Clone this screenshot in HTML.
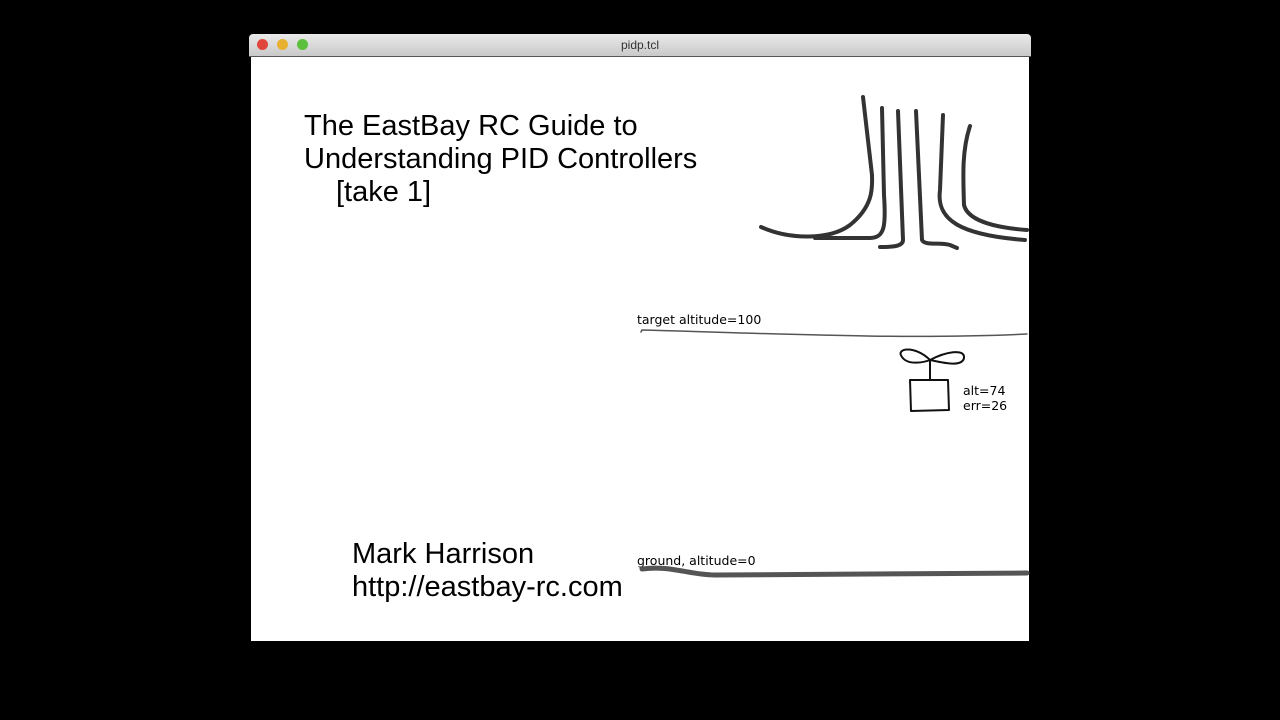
<!DOCTYPE html>
<html><head><meta charset="utf-8"><style>
body{margin:0;width:1280px;height:720px;background:#000;position:relative;overflow:hidden;font-family:"Liberation Sans",sans-serif}
#bar{position:absolute;left:249px;top:34px;width:782px;height:22px;background:linear-gradient(#eaeaea,#c9c9c9);border-bottom:1px solid #555;border-radius:4px 4px 0 0}
#bar .t{position:absolute;left:0;right:0;top:4px;text-align:center;font-size:12px;color:#333}
.d{position:absolute;top:5px;width:11px;height:11px;border-radius:50%}
.big{position:absolute;font-size:29px;color:#000;line-height:33px;white-space:pre}
.sm{position:absolute;font-family:"DejaVu Sans",sans-serif;font-size:12.5px;color:#000;line-height:15px}
</style></head><body>
<div id="bar"><div class="d" style="left:8px;background:#e0453b"></div><div class="d" style="left:28px;background:#e8b030"></div><div class="d" style="left:48px;background:#5cbf3e"></div><div class="t">pidp.tcl</div></div>
<div style="position:absolute;left:251px;top:57px;width:778px;height:584px;background:#fff"></div>
<div class="big" style="left:304px;top:110px">The EastBay RC Guide to
Understanding PID Controllers
<span style="padding-left:32px">[take 1]</span></div>
<div class="big" style="left:352px;top:538px">Mark Harrison
http://eastbay-rc.com</div>
<div class="sm" style="left:637px;top:312px">target altitude=100</div>
<div class="sm" style="left:637px;top:553px">ground, altitude=0</div>
<div class="sm" style="left:963px;top:383px">alt=74<br>err=26</div>
<svg style="position:absolute;left:0;top:0" width="1280" height="720" fill="none" stroke-linecap="round" stroke-linejoin="round">
<g stroke="#333" stroke-width="4">
<path d="M761,227 C790,240 830,240 850,225 C875,205 872,185 872,175 L863,97"/>
<path d="M882,108 L884,195 C886,225 885,238 870,238 L815,238"/>
<path d="M898,111 L903,240 C903,247 890,247 880,247"/>
<path d="M916,111 L922,240 C925,246 940,242 950,245 L957,248"/>
<path d="M943,115 L940,190 C936,220 960,235 1025,240"/>
<path d="M970,126 C962,150 963,175 964,205 C968,222 1000,228 1027,230"/>
</g>
<path d="M641,332 L642,330 C760,333 900,340 1027,334" stroke="#555" stroke-width="1.5"/>
<path d="M642,569 C670,565 690,575 715,575 C800,574 900,574 1027,573" stroke="#555" stroke-width="5"/>
<g stroke="#111" stroke-width="2">
<path d="M930,360 C915,345 895,348 902,357 C908,366 925,362 930,360 C945,352 965,348 964,358 C962,368 940,362 930,360 L930,380"/>
<path d="M910,380 L948,380 L949,410 L911,411 Z"/>
</g>
</svg>
</body></html>
